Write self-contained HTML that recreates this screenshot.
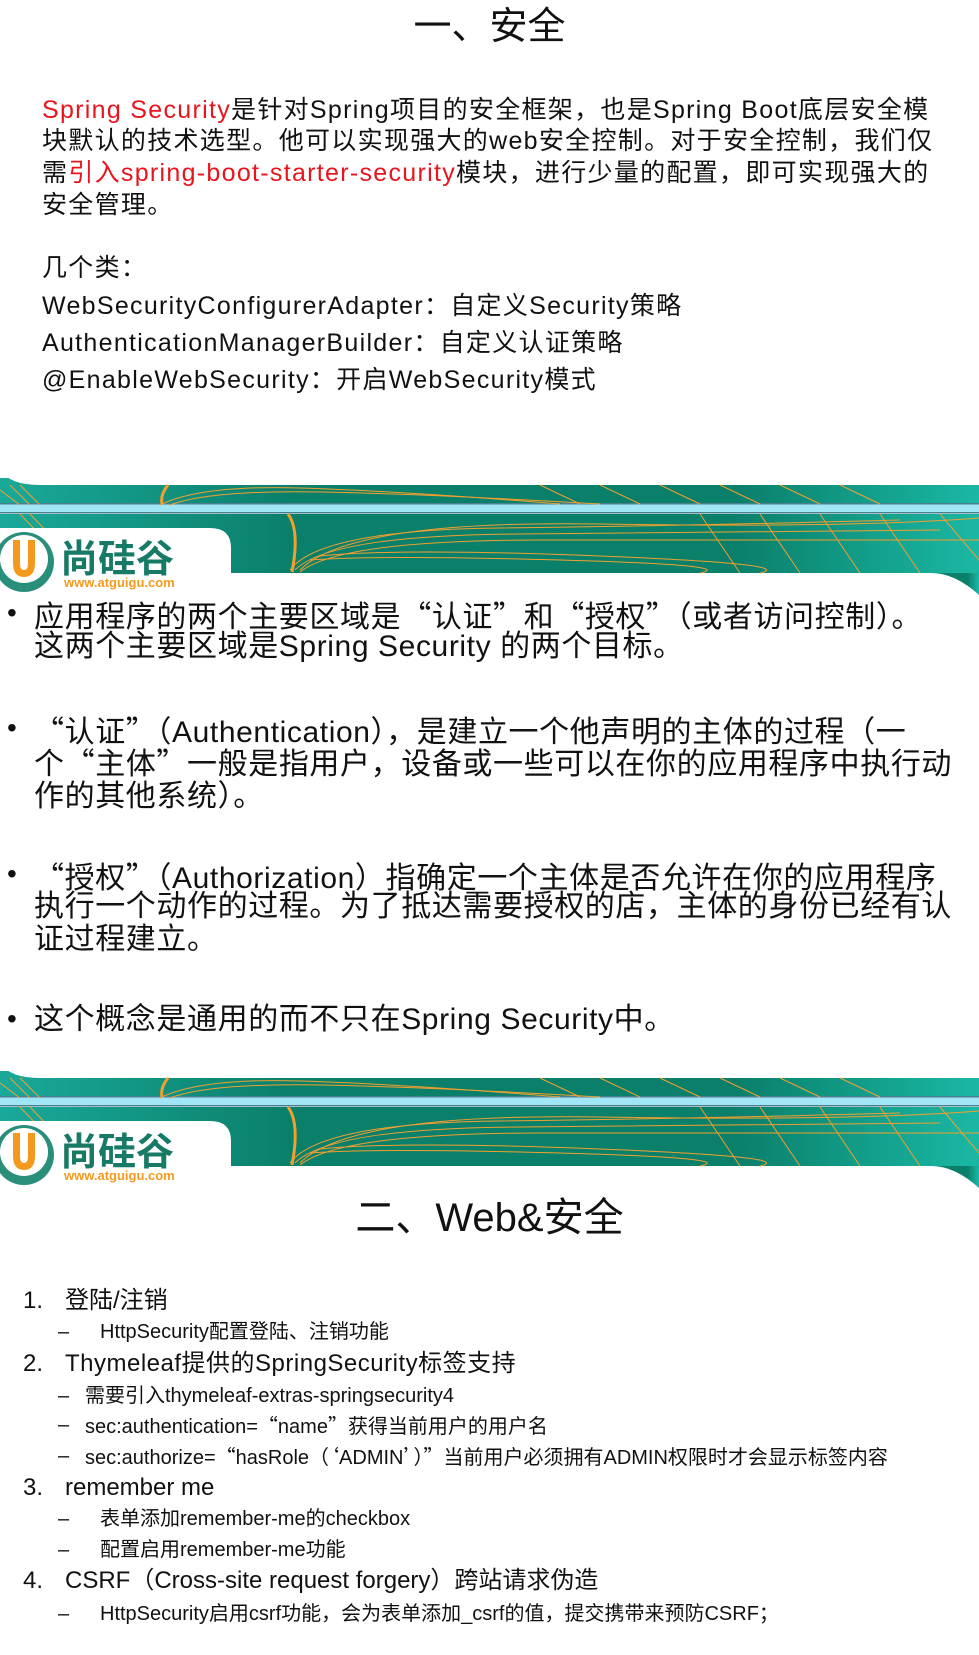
<!DOCTYPE html>
<html><head><meta charset="utf-8"><style>
*{margin:0;padding:0;box-sizing:border-box}
body{width:979px;height:1655px;background:#fff;position:relative;overflow:hidden;font-family:"Liberation Sans","Noto Sans CJK SC",sans-serif;color:#111}
.t{position:absolute;white-space:nowrap;line-height:1}
.r{color:#e8141e}
.q{font-family:"Noto Sans CJK SC",sans-serif}
.p{letter-spacing:1.3px}
.b{letter-spacing:0.6px}
.banner{position:absolute;left:0;width:979px;height:140px}
</style></head><body>

<div class="t" style="left:0;width:979px;text-align:center;top:8px;font-size:38px">一、安全</div>

<div class="t p" style="left:42px;top:98px;font-size:25px"><span class="r">Spring Security</span>是针对Spring项目的安全框架，也是Spring Boot底层安全模</div>
<div class="t p" style="left:42px;top:129px;font-size:25px">块默认的技术选型。他可以实现强大的web安全控制。对于安全控制，我们仅</div>
<div class="t p" style="left:42px;top:161px;font-size:25px">需<span class="r">引入spring-boot-starter-security</span>模块，进行少量的配置，即可实现强大的</div>
<div class="t p" style="left:42px;top:193px;font-size:25px">安全管理。</div>
<div class="t p" style="left:42px;top:256px;font-size:25px">几个类：</div>
<div class="t p" style="left:42px;top:294px;font-size:25px">WebSecurityConfigurerAdapter：自定义Security策略</div>
<div class="t p" style="left:42px;top:331px;font-size:25px">AuthenticationManagerBuilder：自定义认证策略</div>
<div class="t p" style="left:42px;top:368px;font-size:25px">@EnableWebSecurity：开启WebSecurity模式</div>

<svg class="banner" style="top:460px" viewBox="0 0 979 140">
<defs><linearGradient id="g1" x1="0" x2="1"><stop offset="0" stop-color="#1aa99a"/><stop offset=".3" stop-color="#0a7f6a"/><stop offset=".75" stop-color="#0a7f6a"/><stop offset="1" stop-color="#1ab8a4"/></linearGradient></defs>
<rect x="0" y="18" width="979" height="27" fill="url(#g1)"/>
<path d="M0 0 H979 V25 H40 Q10 25 0 10Z" fill="#fff"/>
<rect x="0" y="44" width="979" height="9" fill="#a0e6f7"/>
<rect x="0" y="43" width="979" height="1.5" fill="#4a7f90"/><rect x="0" y="52" width="979" height="1.5" fill="#4a7f90"/>
<rect x="0" y="54" width="979" height="59" fill="url(#g1)"/>
<path d="M931 113 Q955 113 979 135 V113Z" fill="url(#g1)"/>
<g fill="none" stroke="#f0a030" stroke-width="1">
<path d="M160 45 Q200 25 300 28 T560 44"/><path d="M170 45 Q210 30 320 32 T600 44"/>
<path d="M290 110 Q320 70 500 68 T900 60"/><path d="M295 110 Q330 75 520 74 T940 70"/>
<path d="M300 112 Q340 80 540 80 T979 80"/><path d="M300 110 Q350 60 600 64 T979 58"/>
<path d="M310 100 Q380 95 560 100 T700 113"/><path d="M320 96 Q400 88 600 96 T760 113"/>
<path d="M540 25 L580 44 M600 25 L640 44 M660 25 L700 44 M720 25 L760 44 M780 25 L820 44 M840 25 L880 44"/>
<path d="M700 54 L740 113 M760 54 L800 113 M820 54 L860 113 M880 54 L920 113 M940 54 L979 100"/>
<path d="M0 30 L20 45 M10 25 L30 45 M20 25 L40 45 M20 54 L40 75 M30 54 L50 75"/>
</g>
<path d="M292 112 Q300 70 288 54" stroke="#f0a030" stroke-width="3" fill="none"/>
<path d="M168 25 Q160 35 162 44" stroke="#f0a030" stroke-width="3" fill="none"/>
<path d="M0 68 H210 Q231 68 231 88 V132 H0Z" fill="#fff"/>
<circle cx="24" cy="102" r="30" fill="#2a8f7a"/><circle cx="24" cy="99" r="24" fill="#fff"/>
<path d="M13 80 V103 Q13 117 24 117 Q35 117 35 103 V80 H28 V103 Q28 110 24 110 Q20 110 20 103 V80Z" fill="#f39a1e"/>
<text x="60" y="112" font-size="38" font-weight="bold" fill="#177a66" font-family="Noto Sans CJK SC,sans-serif">尚硅谷</text>
<text x="64" y="127" font-size="13" font-weight="bold" fill="#f39a1e" font-family="Liberation Sans,sans-serif">www.atguigu.com</text>
</svg>

<div class="t" style="left:7px;top:599px;font-size:28px">•</div>
<div class="t b" style="left:34px;top:599px;font-size:30px">应用程序的两个主要区域是<span class="q">“</span>认证<span class="q">”</span>和<span class="q">“</span>授权<span class="q">”（</span>或者访问控制<span class="q">）</span>。</div>
<div class="t b" style="left:34px;top:632px;font-size:30px">这两个主要区域是Spring Security 的两个目标。</div>
<div class="t" style="left:7px;top:714px;font-size:28px">•</div>
<div class="t b" style="left:34px;top:714px;font-size:30px"><span class="q">“</span>认证<span class="q">”（</span>Authentication），是建立一个他声明的主体的过程（一</div>
<div class="t b" style="left:34px;top:746px;font-size:30px">个<span class="q">“</span>主体<span class="q">”</span>一般是指用户，设备或一些可以在你的应用程序中执行动</div>
<div class="t b" style="left:34px;top:778px;font-size:30px">作的其他系统<span class="q">）</span>。</div>
<div class="t" style="left:7px;top:860px;font-size:28px">•</div>
<div class="t b" style="left:34px;top:860px;font-size:30px"><span class="q">“</span>授权<span class="q">”（</span>Authorization）指确定一个主体是否允许在你的应用程序</div>
<div class="t b" style="left:34px;top:892px;font-size:30px">执行一个动作的过程。为了抵达需要授权的店，主体的身份已经有认</div>
<div class="t b" style="left:34px;top:925px;font-size:30px">证过程建立。</div>
<div class="t" style="left:7px;top:1005px;font-size:28px">•</div>
<div class="t b" style="left:34px;top:1005px;font-size:30px">这个概念是通用的而不只在Spring Security中。</div>

<svg class="banner" style="top:1053px" viewBox="0 0 979 140">
<rect x="0" y="18" width="979" height="27" fill="url(#g1)"/>
<path d="M0 0 H979 V25 H40 Q10 25 0 10Z" fill="#fff"/>
<rect x="0" y="44" width="979" height="9" fill="#a0e6f7"/>
<rect x="0" y="43" width="979" height="1.5" fill="#4a7f90"/><rect x="0" y="52" width="979" height="1.5" fill="#4a7f90"/>
<rect x="0" y="54" width="979" height="59" fill="url(#g1)"/>
<path d="M931 113 Q955 113 979 135 V113Z" fill="url(#g1)"/>
<g fill="none" stroke="#f0a030" stroke-width="1">
<path d="M160 45 Q200 25 300 28 T560 44"/><path d="M170 45 Q210 30 320 32 T600 44"/>
<path d="M290 110 Q320 70 500 68 T900 60"/><path d="M295 110 Q330 75 520 74 T940 70"/>
<path d="M300 112 Q340 80 540 80 T979 80"/><path d="M300 110 Q350 60 600 64 T979 58"/>
<path d="M310 100 Q380 95 560 100 T700 113"/><path d="M320 96 Q400 88 600 96 T760 113"/>
<path d="M540 25 L580 44 M600 25 L640 44 M660 25 L700 44 M720 25 L760 44 M780 25 L820 44 M840 25 L880 44"/>
<path d="M700 54 L740 113 M760 54 L800 113 M820 54 L860 113 M880 54 L920 113 M940 54 L979 100"/>
<path d="M0 30 L20 45 M10 25 L30 45 M20 25 L40 45 M20 54 L40 75 M30 54 L50 75"/>
</g>
<path d="M292 112 Q300 70 288 54" stroke="#f0a030" stroke-width="3" fill="none"/>
<path d="M168 25 Q160 35 162 44" stroke="#f0a030" stroke-width="3" fill="none"/>
<path d="M0 68 H210 Q231 68 231 88 V132 H0Z" fill="#fff"/>
<circle cx="24" cy="102" r="30" fill="#2a8f7a"/><circle cx="24" cy="99" r="24" fill="#fff"/>
<path d="M13 80 V103 Q13 117 24 117 Q35 117 35 103 V80 H28 V103 Q28 110 24 110 Q20 110 20 103 V80Z" fill="#f39a1e"/>
<text x="60" y="112" font-size="38" font-weight="bold" fill="#177a66" font-family="Noto Sans CJK SC,sans-serif">尚硅谷</text>
<text x="64" y="127" font-size="13" font-weight="bold" fill="#f39a1e" font-family="Liberation Sans,sans-serif">www.atguigu.com</text>
</svg>

<div class="t" style="left:0;width:979px;text-align:center;top:1198px;font-size:40px">二、Web&amp;安全</div>

<div class="t" style="left:23px;top:1289px;font-size:24px">1.</div><div class="t" style="left:65px;top:1289px;font-size:24px">登陆/注销</div>
<div class="t" style="left:58px;top:1322px;font-size:20px">–</div><div class="t" style="left:100px;top:1322px;font-size:20px">HttpSecurity配置登陆、注销功能</div>
<div class="t" style="left:23px;top:1352px;font-size:24px">2.</div><div class="t" style="left:65px;top:1352px;font-size:24px;letter-spacing:0.5px">Thymeleaf提供的SpringSecurity标签支持</div>
<div class="t" style="left:58px;top:1386px;font-size:20px">–</div><div class="t" style="left:85px;top:1386px;font-size:20px">需要引入thymeleaf-extras-springsecurity4</div>
<div class="t" style="left:58px;top:1415px;font-size:20px">–</div><div class="t" style="left:85px;top:1415px;font-size:20px">sec:authentication=<span class="q">“</span>name<span class="q">”</span>获得当前用户的用户名</div>
<div class="t" style="left:58px;top:1446px;font-size:20px">–</div><div class="t" style="left:85px;top:1446px;font-size:20px">sec:authorize=<span class="q">“</span>hasRole<span class="q">（‘</span>ADMIN<span class="q">’）”</span>当前用户必须拥有ADMIN权限时才会显示标签内容</div>
<div class="t" style="left:23px;top:1476px;font-size:24px">3.</div><div class="t" style="left:65px;top:1476px;font-size:24px">remember me</div>
<div class="t" style="left:58px;top:1509px;font-size:20px">–</div><div class="t" style="left:100px;top:1509px;font-size:20px">表单添加remember-me的checkbox</div>
<div class="t" style="left:58px;top:1540px;font-size:20px">–</div><div class="t" style="left:100px;top:1540px;font-size:20px">配置启用remember-me功能</div>
<div class="t" style="left:23px;top:1569px;font-size:24px">4.</div><div class="t" style="left:65px;top:1569px;font-size:24px">CSRF（Cross-site request forgery）跨站请求伪造</div>
<div class="t" style="left:58px;top:1604px;font-size:20px">–</div><div class="t" style="left:100px;top:1604px;font-size:20px">HttpSecurity启用csrf功能，会为表单添加_csrf的值，提交携带来预防CSRF；</div>

</body></html>
